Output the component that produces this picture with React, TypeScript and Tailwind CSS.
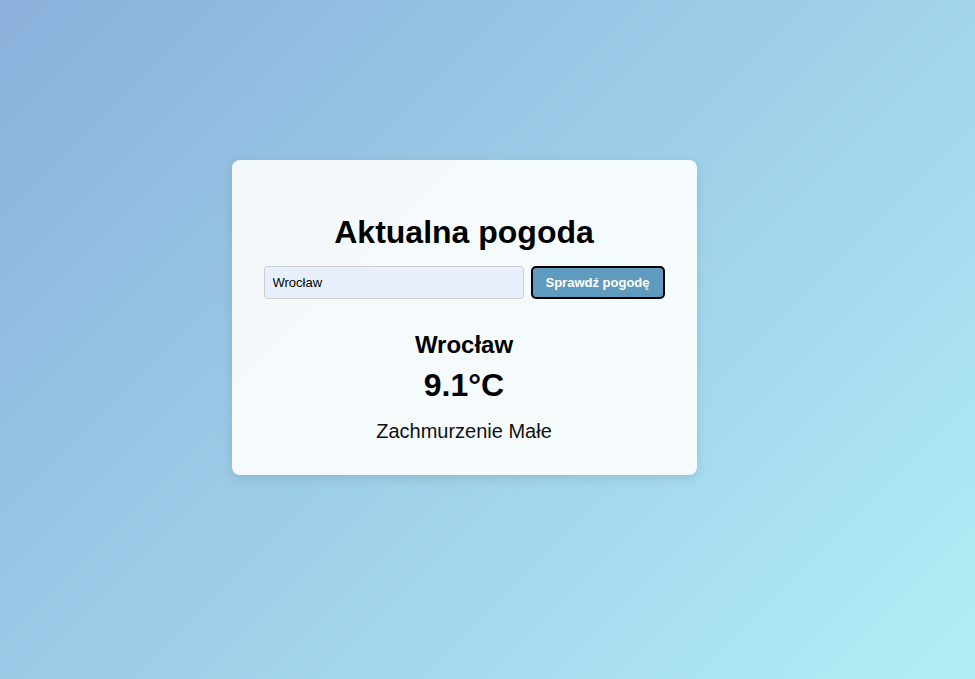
export default function App() {
  return (
    <div
      className="flex min-h-[679px] w-full items-center justify-center bg-[linear-gradient(135deg,#8ab0db_0%,#b1eef6_100%)] pr-[47px] pb-[44px]"
      style={{ fontFamily: '"Liberation Sans", Arial, sans-serif' }}
    >
      <div className="w-[465px] rounded-lg bg-white/90 px-8 pt-[54px] pb-8 text-center shadow-[0_4px_12px_rgba(0,0,0,0.1)]">
        <h1 className="text-[32px] leading-[37px] font-bold text-black">Aktualna pogoda</h1>

        <div className="mt-[15px] flex gap-[7px]">
          <input
            defaultValue="Wrocław"
            className="h-[33px] w-[260px] shrink-0 rounded-[4px] border border-[#cccccc] bg-[#e8f0fe] px-2 text-[13px] text-black outline-none"
          />
          <button className="h-[33px] w-[134px] shrink-0 rounded-[5px] border-2 border-black bg-[#5f9bbf] text-[13px] font-bold text-white">
            Sprawdź pogodę
          </button>
        </div>

        <div className="mt-8">
          <h2 className="text-[24px] leading-[28px] font-bold text-black">Wrocław</h2>
          <p className="mt-[8px] text-[32px] leading-[37px] font-bold text-black">9.1°C</p>
          <p className="mt-[16px] text-[20px] leading-[23px] text-[#111]">Zachmurzenie Małe</p>
        </div>
      </div>
    </div>
  );
}
